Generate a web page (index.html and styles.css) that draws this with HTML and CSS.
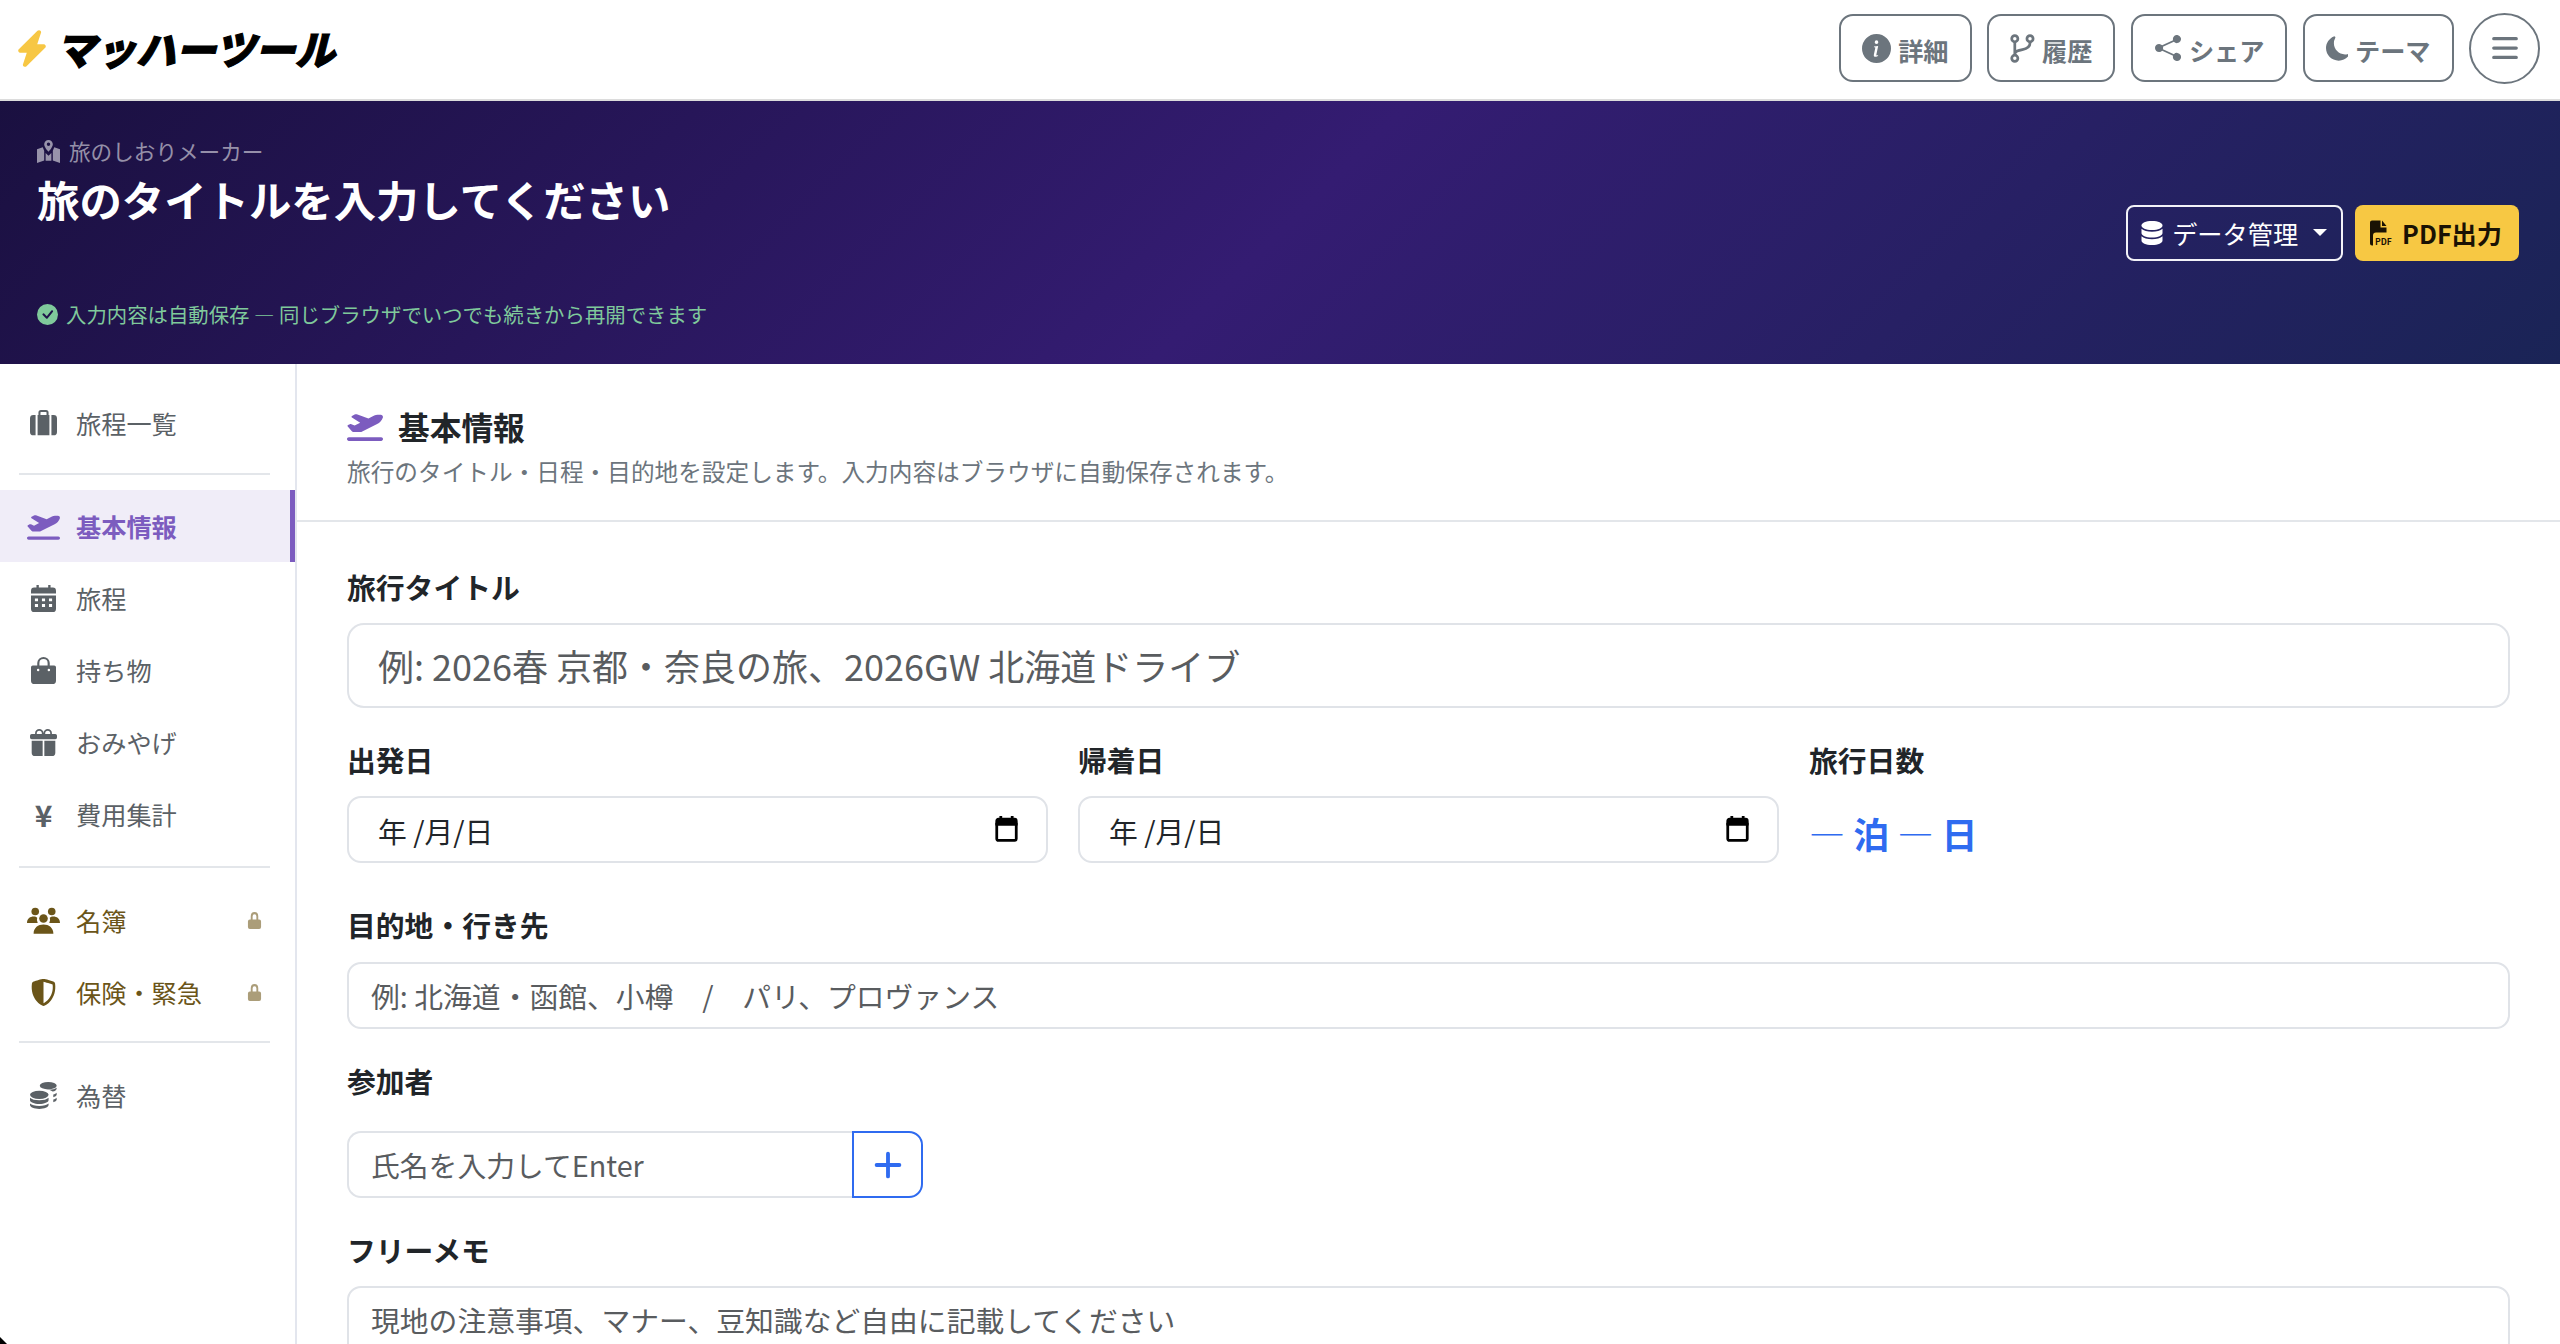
FILE: index.html
```html
<!DOCTYPE html>
<html lang="ja">
<head>
  <meta charset="UTF-8" />
  <meta name="viewport" content="width=device-width, initial-scale=1.0"/>
  <title>旅のしおりメーカー</title>
  <link rel="stylesheet" href="styles.css">
</head>
<body>
  <nav class="topBar">
    <a class="logo">
      <svg class="logoBolt" viewBox="2 -0.500 12 17" preserveAspectRatio="none"><path d="M11.251.068a.5.5 0 0 1 .227.58L9.677 6.5H13a.5.5 0 0 1 .364.843l-8 8.5a.5.5 0 0 1-.842-.49L6.323 9.5H3a.5.5 0 0 1-.364-.843l8-8.5a.5.5 0 0 1 .615-.09z"/></svg>
      <span class="logoText">マッハーツール</span>
    </a>
    <div class="topActions">
      <button class="topBtn">
        <svg class="iconInfo" viewBox="0 0 16 16"><path d="M8 16A8 8 0 1 0 8 0a8 8 0 0 0 0 16m.93-9.412-1 4.705c-.07.34.029.533.304.533.194 0 .487-.07.686-.246l-.088.416c-.287.346-.92.598-1.465.598-.703 0-1.002-.422-.808-1.319l.738-3.468c.064-.293.006-.399-.287-.47l-.451-.081.082-.381 2.29-.287zM8 5.5a1 1 0 1 1 0-2 1 1 0 0 1 0 2"/></svg>
        <span>詳細</span>
      </button>
      <button class="topBtn">
        <svg class="iconBranch" viewBox="1.500 0 13.500 16" fill="none" stroke="currentColor" stroke-width="1.500"><circle cx="4" cy="2.600" r="1.700"/><circle cx="4" cy="13.400" r="1.700"/><circle cx="12.400" cy="2.600" r="1.700"/><path d="M4 4.300v7.400M12.400 4.300v.7c0 2.600-2 3.200-4.200 3.600C6 9 4 9.400 4 11"/></svg>
        <span>履歴</span>
      </button>
      <button class="topBtn">
        <svg class="iconShare" viewBox="0 0 16 16"><path d="M11 2.5a2.5 2.5 0 1 1 .603 1.628l-6.718 3.12a2.5 2.5 0 0 1 0 1.504l6.718 3.12a2.5 2.5 0 1 1-.488.876l-6.718-3.12a2.5 2.5 0 1 1 0-3.256l6.718-3.12A2.5 2.5 0 0 1 11 2.5"/></svg>
        <span>シェア</span>
      </button>
      <button class="topBtn">
        <svg class="iconMoon" viewBox="0 0 14.500 16"><path d="M6 .278a.77.77 0 0 1 .08.858 7.2 7.2 0 0 0-.878 3.46c0 4.021 3.278 7.277 7.318 7.277q.792-.001 1.533-.16a.79.79 0 0 1 .81.316.73.73 0 0 1-.031.893A8.35 8.35 0 0 1 8.344 16C3.734 16 0 12.286 0 7.71 0 4.266 2.114 1.312 5.124.06A.75.75 0 0 1 6 .278"/></svg>
        <span>テーマ</span>
      </button>
      <button class="menuBtn" aria-label="メニュー">
        <svg viewBox="0 0 24 24" fill="none" stroke="currentColor" stroke-width="2.600" stroke-linecap="round"><path d="M3 4.500h18M3 12h18M3 19.500h18"/></svg>
      </button>
    </div>
  </nav>

  <header class="hero">
    <div class="heroText">
      <div class="heroSub">
        <svg viewBox="0 0 16 16"><path d="M8 0a3 3 0 0 0-3 3c0 1.800 2 4.200 3 5.200 1-1 3-3.400 3-5.200a3 3 0 0 0-3-3m0 4.200A1.200 1.200 0 1 1 8 1.800a1.200 1.200 0 0 1 0 2.400M4 5 0 6.500V16l5-1.700V7.500zM12 5l-1 2.500V14.300l5 1.700V6.500zM6 9v5.400l4 0V9l-2 2z"/></svg>
        旅のしおりメーカー
      </div>
      <h1 class="heroTitle">旅のタイトルを入力してください</h1>
      <div class="heroSaved">
        <svg viewBox="0 0 16 16"><path d="M16 8A8 8 0 1 1 0 8a8 8 0 0 1 16 0m-3.970-3.030a.75.75 0 0 0-1.080.022L7.477 9.417 5.384 7.323a.75.75 0 0 0-1.060 1.060L6.970 11.030a.75.75 0 0 0 1.079-.020l3.992-4.990a.75.75 0 0 0-.010-1.050z"/></svg>
        入力内容は自動保存 — 同じブラウザでいつでも続きから再開できます
      </div>
    </div>
    <div class="heroActions">
      <button class="dataBtn">
        <svg viewBox="0 0 16 16"><path d="M8 0C3.800 0 1 1.300 1 3s2.800 3 7 3 7-1.300 7-3-2.800-3-7-3"/><path d="M1 5.200V8c0 1.700 2.800 3 7 3s7-1.300 7-3V5.200C13.700 6.500 11 7.200 8 7.200S2.300 6.500 1 5.200"/><path d="M1 10.200V13c0 1.700 2.800 3 7 3s7-1.300 7-3v-2.800c-1.300 1.300-4 2-7 2s-5.700-.700-7-2"/></svg>
        データ管理
        <span class="caret"></span>
      </button>
      <button class="pdfBtn">
        <svg viewBox="0 0 25 25"><path d="M0 2a2 2 0 0 1 2-2h8.500v7h6v5H6a3 3 0 0 0-3 3v10H2a2 2 0 0 1-2-2zM12 0l4.500 5.500H12z"/><text x="5" y="24" class="pdfMark">PDF</text></svg>
        PDF出力
      </button>
    </div>
  </header>

  <div class="workspace">
    <aside class="sideNav">
      <a class="sideItem">
        <svg class="sideIcon" viewBox="0 0 16 16"><path d="M5 3V1.500A1.500 1.500 0 0 1 6.500 0h3A1.500 1.500 0 0 1 11 1.500V3h.5v12h-7V3zm1.200 0h3.600V1.500a.3.300 0 0 0-.3-.3h-3a.3.300 0 0 0-.3.300zM3.300 3v12H2a2 2 0 0 1-2-2V5a2 2 0 0 1 2-2zM12.700 3H14a2 2 0 0 1 2 2v8a2 2 0 0 1-2 2h-1.300z"/></svg>
        旅程一覧
      </a>
      <hr class="sideRule">
      <a class="sideItem active">
        <svg class="sideIcon" viewBox="0 0 640 512"><path d="M381 114.900L186.100 41.800c-16.700-6.200-35.200-5.300-51.100 2.700L89.100 67.400C78 73 77.200 88.500 87.600 95.200l146.900 94.500L136 240 77.800 214.100c-8.700-3.900-18.800-3.700-27.300 .6L18.300 230.800c-9.300 4.700-11.800 16.800-5 24.700l73.100 85.300c6.100 7.100 15 11.200 24.300 11.200H248.400c5 0 9.900-1.200 14.300-3.400L535.600 212.200c46.500-23.300 82.500-63.300 100.800-112C645.900 75 627.200 48 600.200 48H542.800c-20.200 0-40.200 4.800-58.200 14L381 114.900zM0 480c0 17.700 14.300 32 32 32H608c17.700 0 32-14.300 32-32s-14.300-32-32-32H32c-17.700 0-32 14.300-32 32z"/></svg>
        基本情報
      </a>
      <a class="sideItem">
        <svg class="sideIcon narrow" viewBox="0 0 16 16" preserveAspectRatio="none"><path fill-rule="evenodd" d="M3.500 0h1.500v1.500h6V0h1.500v1.500H14a2 2 0 0 1 2 2V5H0V3.500a2 2 0 0 1 2-2h1.500zM0 6.200h16V14a2 2 0 0 1-2 2H2a2 2 0 0 1-2-2zM2.500 8v1.700h2V8zm4.500 0v1.700h2V8zm4.500 0v1.700h2V8zm-9 3.300V13h2v-1.700zm4.500 0V13h2v-1.700zm4.500 0V13h2v-1.700z"/></svg>
        旅程
      </a>
      <a class="sideItem">
        <svg class="sideIcon narrow" viewBox="1 0 14 16" preserveAspectRatio="none"><path fill-rule="evenodd" d="M8 0a3.500 3.500 0 0 1 3.500 3.500V5H14a1 1 0 0 1 1 1v8a2 2 0 0 1-2 2H3a2 2 0 0 1-2-2V6a1 1 0 0 1 1-1h2.500V3.500A3.500 3.500 0 0 1 8 0m0 1.200a2.300 2.300 0 0 0-2.300 2.300V5h4.600V3.500A2.300 2.300 0 0 0 8 1.200M5 7a.7.7 0 1 0 0 1.400A.7.7 0 0 0 5 7m6 0a.7.7 0 1 0 0 1.400A.7.7 0 0 0 11 7"/></svg>
        持ち物
      </a>
      <a class="sideItem">
        <svg class="sideIcon" viewBox="0 0 16 16"><path d="M3 2.500a2.500 2.500 0 0 1 5 0 2.500 2.500 0 0 1 5 0v.006c0 .07 0 .27-.038.494H15a1 1 0 0 1 1 1v1a1 1 0 0 1-1 1H1a1 1 0 0 1-1-1V4a1 1 0 0 1 1-1h2.038A3 3 0 0 1 3 2.506zm1.068.5H7v-.5a1.500 1.500 0 1 0-3 0c0 .085.002.274.045.43zM9 3h2.932l.023-.07c.043-.156.045-.345.045-.43a1.500 1.500 0 0 0-3 0zM1 7v7a2 2 0 0 0 2 2h4.500V7zm7.500 9H13a2 2 0 0 0 2-2V7H8.500z"/></svg>
        おみやげ
      </a>
      <a class="sideItem">
        <span class="sideIcon yen">¥</span>
        費用集計
      </a>
      <hr class="sideRule mid">
      <a class="sideItem locked">
        <svg class="sideIcon" viewBox="0 0 20 16"><circle cx="5" cy="2.500" r="2.300"/><circle cx="15" cy="2.500" r="2.300"/><circle cx="10" cy="6.800" r="2.600"/><path d="M0 9.500C0 6.800 2 5.600 4 5.600c1 0 1.700.3 2.200.7a3.700 3.700 0 0 0 .3 3.200zM20 9.500c0-2.700-2-3.900-4-3.900-1 0-1.700.3-2.200.7a3.700 3.700 0 0 1-.3 3.200zM4 16c0-3.700 2.800-5.600 6-5.600s6 1.900 6 5.600z"/></svg>
        名簿
        <svg class="lockIcon" viewBox="0 0 16 16" preserveAspectRatio="none"><path d="M8 0a4 4 0 0 1 4 4v3h1a2 2 0 0 1 2 2v5a2 2 0 0 1-2 2H3a2 2 0 0 1-2-2V9a2 2 0 0 1 2-2h1V4a4 4 0 0 1 4-4m0 2a2 2 0 0 0-2 2v3h4V4a2 2 0 0 0-2-2"/></svg>
      </a>
      <a class="sideItem locked">
        <svg class="sideIcon" viewBox="0 0 16 16"><path fill-rule="evenodd" d="M8 0c-.69 0-1.843.265-2.928.56-1.110.3-2.229.655-2.887.87a1.540 1.540 0 0 0-1.044 1.262c-.596 4.477.787 7.795 2.465 9.990a11.800 11.800 0 0 0 2.517 2.453c.386.273.744.482 1.048.625.28.132.581.24.829.24s.548-.108.829-.24a7 7 0 0 0 1.048-.625 11.800 11.800 0 0 0 2.517-2.453c1.678-2.195 3.061-5.513 2.465-9.990a1.540 1.540 0 0 0-1.044-1.263 63 63 0 0 0-2.887-.87C9.843.266 8.690 0 8 0m0 1.600v12.700c.5-.2 1.900-1 3.300-2.800 1.300-1.700 2.600-4.500 2.100-8.300-.7-.2-1.700-.5-2.700-.8C9.500 2 8.500 1.700 8 1.600"/></svg>
        保険・緊急
        <svg class="lockIcon" viewBox="0 0 16 16" preserveAspectRatio="none"><path d="M8 0a4 4 0 0 1 4 4v3h1a2 2 0 0 1 2 2v5a2 2 0 0 1-2 2H3a2 2 0 0 1-2-2V9a2 2 0 0 1 2-2h1V4a4 4 0 0 1 4-4m0 2a2 2 0 0 0-2 2v3h4V4a2 2 0 0 0-2-2"/></svg>
      </a>
      <hr class="sideRule low">
      <a class="sideItem">
        <svg class="sideIcon" viewBox="0 0 16 16"><ellipse cx="10.800" cy="2.200" rx="5" ry="2.200"/><path d="M15.800 3.800c0 .9-1 1.600-2.400 1.900a7 7 0 0 0-2.200-1.100c2-.1 3.700-.5 4.600-1.200zM15.800 6.300v1.400c-.4.700-1.200 1.100-2 1.300V7.400c.9-.2 1.600-.6 2-1.100M15.800 9.300v1.400c-.4.700-1.200 1.100-2 1.300v-1.600c.9-.2 1.600-.6 2-1.100"/><ellipse cx="5.500" cy="7.600" rx="5.500" ry="2.400"/><path d="M0 9.300c1 1 3 1.500 5.500 1.500s4.500-.5 5.500-1.500v1.500c0 1.200-2.500 2.200-5.500 2.200S0 12 0 10.800zM0 12.800c1 1 3 1.400 5.500 1.400s4.500-.4 5.500-1.400v.9C11 15 8.500 16 5.500 16S0 15 0 13.700z"/></svg>
        為替
      </a>
    </aside>

    <main class="content">
      <div class="sectionHead">
        <h2 class="sectionTitle">
          <svg viewBox="0 0 640 512"><path d="M381 114.900L186.100 41.800c-16.700-6.200-35.200-5.300-51.100 2.700L89.100 67.400C78 73 77.200 88.500 87.600 95.200l146.900 94.500L136 240 77.800 214.100c-8.700-3.900-18.800-3.700-27.300 .6L18.300 230.800c-9.300 4.700-11.800 16.800-5 24.700l73.100 85.300c6.100 7.100 15 11.200 24.300 11.200H248.400c5 0 9.900-1.200 14.300-3.400L535.600 212.200c46.500-23.300 82.500-63.300 100.800-112C645.900 75 627.200 48 600.200 48H542.800c-20.200 0-40.200 4.800-58.200 14L381 114.900zM0 480c0 17.700 14.300 32 32 32H608c17.700 0 32-14.300 32-32s-14.300-32-32-32H32c-17.700 0-32 14.300-32 32z"/></svg>
          基本情報
        </h2>
        <p class="sectionDesc">旅行のタイトル・日程・目的地を設定します。入力内容はブラウザに自動保存されます。</p>
      </div>

      <form class="form">
        <div class="field">
          <label class="fieldLabel">旅行タイトル</label>
          <input class="textInput large" type="text" placeholder="例: 2026春 京都・奈良の旅、2026GW 北海道ドライブ">
        </div>

        <div class="dateRow">
          <div>
            <label class="fieldLabel">出発日</label>
            <div class="dateInput">
              <span>年 /月/日</span>
              <svg viewBox="0 0 14 16" fill="none" stroke="#000" stroke-width="1.700"><path d="M1 5h12v9a1 1 0 0 1-1 1H2a1 1 0 0 1-1-1z"/><path fill="#000" d="M1 5V3a1 1 0 0 1 1-1h10a1 1 0 0 1 1 1v2z"/><path d="M3.500 0v3M10.500 0v3"/></svg>
            </div>
          </div>
          <div>
            <label class="fieldLabel">帰着日</label>
            <div class="dateInput">
              <span>年 /月/日</span>
              <svg viewBox="0 0 14 16" fill="none" stroke="#000" stroke-width="1.700"><path d="M1 5h12v9a1 1 0 0 1-1 1H2a1 1 0 0 1-1-1z"/><path fill="#000" d="M1 5V3a1 1 0 0 1 1-1h10a1 1 0 0 1 1 1v2z"/><path d="M3.500 0v3M10.500 0v3"/></svg>
            </div>
          </div>
          <div>
            <label class="fieldLabel">旅行日数</label>
            <div class="nights"><span class="dash">—</span> 泊 <span class="dash">—</span> 日</div>
          </div>
        </div>

        <div class="field">
          <label class="fieldLabel dest">目的地・行き先</label>
          <input class="textInput" type="text" placeholder="例: 北海道・函館、小樽　/　パリ、プロヴァンス">
        </div>

        <div class="field">
          <label class="fieldLabel people">参加者</label>
          <div class="addGroup">
            <input class="textInput" type="text" placeholder="氏名を入力してEnter">
            <button class="addBtn" type="button" aria-label="追加">
              <svg viewBox="0 0 16 16" fill="none" stroke="currentColor" stroke-width="1.800" stroke-linecap="round"><path d="M8 1.500v13M1.500 8h13"/></svg>
            </button>
          </div>
        </div>

        <div>
          <label class="fieldLabel">フリーメモ</label>
          <textarea class="textInput memo" placeholder="現地の注意事項、マナー、豆知識など自由に記載してください"></textarea>
        </div>
      </form>
    </main>
  </div>

  <div class="windowCorner"></div>
</body>
</html>
```

FILE: styles.css
```css
* {
  box-sizing: border-box;
}

body {
  margin: 0;
  height: 100vh;
  overflow: hidden;
  display: flex;
  flex-direction: column;
  font-family: "Noto Sans CJK JP", "Noto Sans", sans-serif;
  color: #212529;
  background: #fff;
}

button {
  font-family: inherit;
}

/* top bar */
.topBar {
  height: 101px;
  flex-shrink: 0;
  display: flex;
  align-items: center;
  justify-content: space-between;
  padding: 0 20px 3px 18px;
  border-bottom: 2px solid #dcdcdc;
}

.logo {
  display: flex;
  align-items: center;
  gap: 14px;
}

.logoBolt {
  width: 28px;
  height: 37px;
  fill: #f7c744;
  stroke: #f7c744;
  stroke-width: 0.8;
  stroke-linejoin: round;
}

.logoText {
  display: inline-block;
  font-size: 40px;
  font-weight: 900;
  line-height: 48px;
  color: #000;
  -webkit-text-stroke: 1.2px #000;
  transform: skewX(-14deg);
}

.topActions {
  display: flex;
  align-items: center;
  gap: 15.5px;
}

.topBtn {
  height: 68px;
  display: flex;
  align-items: center;
  gap: 7px;
  padding: 0 21px;
  background: #fff;
  border: 2px solid #6c757d;
  border-radius: 14px;
  color: #6c757d;
  font-size: 25.2px;
  font-weight: 700;
}

.topBtn span {
  padding-top: 4px;
}

.topBtn svg {
  fill: currentColor;
}

.topBtn svg[fill="none"] {
  fill: none;
}

.iconInfo {
  width: 29px;
  height: 29px;
}

.iconBranch {
  width: 25px;
  height: 29px;
}

.iconShare {
  width: 28px;
  height: 26px;
}

.iconMoon {
  width: 22px;
  height: 25px;
}

.menuBtn {
  width: 71px;
  height: 71px;
  display: flex;
  align-items: center;
  justify-content: center;
  padding: 0;
  background: #fff;
  border: 2px solid #6c757d;
  border-radius: 50%;
  color: #6c757d;
}

.menuBtn svg {
  width: 30px;
  height: 30px;
}

/* hero */
.hero {
  height: 263px;
  flex-shrink: 0;
  display: flex;
  align-items: center;
  justify-content: space-between;
  padding: 0 41px 0 37px;
  background: linear-gradient(135deg, #1a1040 0%, #341c72 50%, #1a2456 100%);
}

.heroSub {
  display: flex;
  align-items: center;
  gap: 9px;
  font-size: 21.6px;
  line-height: 30px;
  color: rgba(255, 255, 255, 0.55);
}

.heroSub svg {
  width: 23px;
  height: 23px;
  fill: currentColor;
}

.heroTitle {
  margin: 3px 0 0;
  font-size: 42.4px;
  font-weight: 700;
  line-height: 60px;
  color: #fff;
}

.heroSaved {
  display: flex;
  align-items: center;
  gap: 8px;
  margin-top: 70px;
  font-size: 20.4px;
  line-height: 30px;
  color: #7fc99b;
}

.heroSaved svg {
  width: 21px;
  height: 21px;
  fill: currentColor;
}

.heroActions {
  display: flex;
  gap: 12px;
}

.dataBtn,
.pdfBtn {
  height: 56px;
  display: flex;
  align-items: center;
  border-radius: 8px;
  font-size: 25.2px;
}

.dataBtn {
  gap: 8px;
  padding: 0 14px 0 12px;
  background: transparent;
  border: 2px solid #f2f2f8;
  color: #fff;
}

.dataBtn svg {
  width: 24px;
  height: 26px;
  fill: currentColor;
}

.caret {
  width: 0;
  height: 0;
  margin-left: 7px;
  border-left: 7px solid transparent;
  border-right: 7px solid transparent;
  border-top: 7px solid #fff;
}

.pdfBtn {
  gap: 7px;
  padding: 0 17px 0 15px;
  background: #f7c843;
  border: 0;
  color: #1a1204;
  font-weight: 700;
}

.pdfBtn svg {
  width: 25px;
  height: 26px;
  fill: currentColor;
}

.pdfMark {
  font-size: 8.500px;
  font-weight: 700;
}

/* sidebar + content */
.workspace {
  flex: 1;
  min-height: 0;
  display: flex;
}

.sideNav {
  width: 297px;
  flex-shrink: 0;
  padding-top: 23px;
  border-right: 2px solid #e3e6ee;
}

.sideItem {
  height: 72px;
  display: flex;
  align-items: center;
  gap: 16px;
  padding: 0 33px 0 27px;
  font-size: 25.2px;
  color: #5b6166;
}

.sideItem.active {
  background: #f0edf8;
  border-right: 5px solid #7c5cbf;
  color: #7c5cbf;
  font-weight: 700;
}

.sideItem.locked {
  color: #6b5519;
}

.sideIcon {
  width: 33px;
  height: 27px;
  flex-shrink: 0;
  fill: currentColor;
}

.sideIcon.narrow {
  width: 25px;
  margin: 0 4px;
}

.yen {
  font-size: 30px;
  font-weight: 700;
  line-height: 27px;
  text-align: center;
}

.lockIcon {
  width: 15px;
  height: 17px;
  margin-left: auto;
  fill: #ab9d79;
}

.sideRule {
  height: 2px;
  margin: 14px 25px 15px 19px;
  border: 0;
  background: #e3e6ea;
}

.sideRule.mid {
  margin-top: 16px;
  margin-bottom: 16px;
}

.sideRule.low {
  margin-top: 13px;
  margin-bottom: 16px;
}

.content {
  flex: 1;
  min-width: 0;
}

.sectionHead {
  padding: 40px 50px 32px;
  border-bottom: 2px solid #e3e6ea;
}

.sectionTitle {
  display: flex;
  align-items: center;
  gap: 15px;
  margin: 0;
  font-size: 31.7px;
  font-weight: 700;
  line-height: 44px;
}

.sectionTitle svg {
  width: 36px;
  height: 29px;
  fill: #7c5cbf;
}

.sectionDesc {
  margin: 6px 0 0;
  font-size: 23.66px;
  line-height: 34px;
  color: #6c757d;
}

.form {
  padding: 48px 50px 0;
}

.field {
  margin-bottom: 35px;
}

.fieldLabel {
  display: block;
  margin-bottom: 20px;
  font-size: 28.8px;
  font-weight: 700;
  line-height: 33px;
}

.fieldLabel.dest {
  margin-bottom: 21px;
}

.fieldLabel.people {
  margin-bottom: 34px;
}

.textInput {
  display: block;
  width: 100%;
  height: 67px;
  padding: 0 22px;
  background: #fff;
  border: 2px solid #e0e3e8;
  border-radius: 14px;
  font-family: inherit;
  font-size: 28.8px;
  color: #212529;
}

.textInput::placeholder {
  color: #595c5f;
  opacity: 1;
}

.textInput.large {
  height: 85px;
  padding: 0 29px 2px;
  border-radius: 17px;
  font-size: 36px;
}

.memo {
  height: 200px;
  padding-top: 11px;
  resize: none;
}

.dateRow {
  display: grid;
  grid-template-columns: repeat(3, 1fr);
  gap: 30px;
  margin-bottom: 45px;
}

.dateInput {
  height: 67px;
  display: flex;
  align-items: center;
  justify-content: space-between;
  padding: 2px 28px 0 29px;
  border: 2px solid #e0e3e8;
  border-radius: 14px;
  font-size: 28.8px;
}

.dateInput svg {
  width: 23px;
  height: 26px;
  margin-bottom: 4px;
}

.nights {
  margin-top: 30px;
  font-size: 36px;
  font-weight: 700;
  line-height: 54px;
  color: #2f6bf0;
}

.dash {
  font-weight: 400;
}

.addGroup {
  display: flex;
  width: 576px;
}

.addGroup .textInput {
  flex: 1;
  border-right: 0;
  border-radius: 14px 0 0 14px;
}

.addBtn {
  width: 71px;
  height: 67px;
  display: flex;
  align-items: center;
  justify-content: center;
  padding: 0;
  background: #fff;
  border: 2px solid #2f6bf0;
  border-radius: 0 14px 14px 0;
  color: #2f6bf0;
}

.addBtn svg {
  width: 28px;
  height: 28px;
  stroke-width: 2.200;
}

/* the black speck left by the window's rounded corner */
.windowCorner {
  position: fixed;
  left: 0;
  bottom: 0;
  width: 7px;
  height: 7px;
  background: #000;
  clip-path: polygon(0 0, 100% 100%, 0 100%);
}
```
